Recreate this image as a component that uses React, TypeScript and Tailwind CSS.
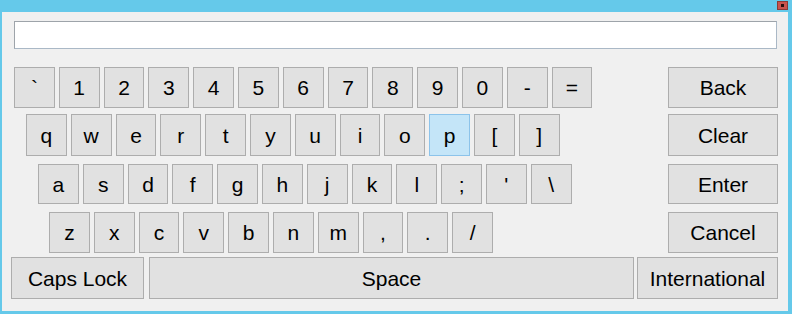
const font = { fontFamily: '"Liberation Sans", Arial, sans-serif' };

const rows: { keys: string[]; pad: string; h: string; side: string }[] = [
  { keys: ["`", "1", "2", "3", "4", "5", "6", "7", "8", "9", "0", "-", "="], pad: "pl-[12px]", h: "h-[41px]", side: "Back" },
  { keys: ["q", "w", "e", "r", "t", "y", "u", "i", "o", "p", "[", "]"], pad: "pl-[24px]", h: "h-[42px]", side: "Clear" },
  { keys: ["a", "s", "d", "f", "g", "h", "j", "k", "l", ";", "'", "\\"], pad: "pl-[36px]", h: "h-[40px]", side: "Enter" },
  { keys: ["z", "x", "c", "v", "b", "n", "m", ",", ".", "/"], pad: "pl-[47px]", h: "h-[41px]", side: "Cancel" },
];

const rowGap = ["mt-[18px]", "mt-[6px]", "mt-[8px]", "mt-[8px]"];

function Key({ label, active, className = "" }: { label: string; active?: boolean; className?: string }) {
  return (
    <button
      className={
        "flex h-full items-center justify-center border text-[21px] leading-none text-black " +
        (active ? "border-[#8cc3ea] bg-[#c4e5f8] " : "border-[#adadad] bg-[#e1e1e1] ") +
        className
      }
    >
      {label}
    </button>
  );
}

export default function App() {
  return (
    <div className="flex h-[314px] w-[792px] flex-col bg-[#65c9ea] pb-[3px] pl-[2px] pr-[4px]" style={font}>
      <div className="flex h-[12px] items-start justify-end">
        <div className="mt-[1px] flex h-[9px] w-[11px] items-center justify-center border border-[#8a3a36] bg-[#c9534d]">
          <div className="h-[3px] w-[3px] bg-[#2a1010]" />
        </div>
      </div>
      <div className="flex flex-1 flex-col bg-[#f0f0f0]">
        <div className="mt-[9px] ml-[12px] h-[28px] w-[763px] border border-[#aab8c6] border-l-[#9ea4aa] border-t-[#9ea4aa] bg-white" />
        {rows.map((row, i) => (
          <div key={row.side} className={"flex justify-between pr-[10px] " + row.h + " " + row.pad + " " + rowGap[i]}>
            <div className="flex gap-[4px]">
              {row.keys.map((k) => (
                <Key key={k} label={k} active={k === "p"} className="w-[40.8px]" />
              ))}
            </div>
            <Key label={row.side} className="w-[110px]" />
          </div>
        ))}
        <div className="mt-[4px] flex h-[42px] pl-[9px]">
          <Key label="Caps Lock" className="w-[133px]" />
          <Key label="Space" className="ml-[5px] w-[485px]" />
          <Key label="International" className="ml-[3px] w-[141px]" />
        </div>
      </div>
    </div>
  );
}
